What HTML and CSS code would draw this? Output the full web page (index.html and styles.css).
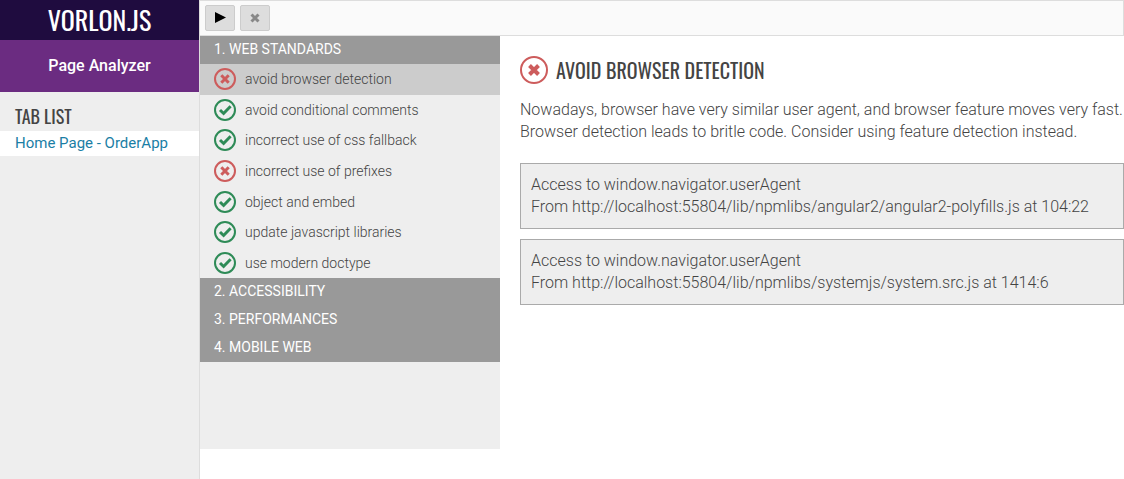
FILE: index.html
```
<!DOCTYPE html>
<html lang="en">
<head>
<meta charset="utf-8">
<title>Vorlon.JS - Page Analyzer</title>
<link rel="stylesheet" href="styles.css">
</head>
<body>
<svg class="defs" aria-hidden="true">
  <symbol id="cross" viewBox="0 0 22 22">
    <circle cx="11" cy="11" r="10" fill="none" stroke="currentColor" stroke-width="2"/>
    <path d="M7.300 7.300l7.400 7.400M14.700 7.300l-7.400 7.400" stroke="currentColor" stroke-width="3"/>
  </symbol>
  <symbol id="cross-large" viewBox="0 0 28 28">
    <circle cx="14" cy="14" r="13" fill="none" stroke="currentColor" stroke-width="2"/>
    <path d="M9.500 9.500l9 9M18.500 9.500l-9 9" stroke="currentColor" stroke-width="4"/>
  </symbol>
  <symbol id="check" viewBox="0 0 22 22">
    <circle cx="11" cy="11" r="10" fill="none" stroke="currentColor" stroke-width="2"/>
    <path d="M6 11l3.600 3.500 7-7.200" fill="none" stroke="currentColor" stroke-width="3"/>
  </symbol>
</svg>
<div class="app">
  <aside class="sidebar">
    <div class="logo">VORLON.JS</div>
    <div class="plugin-name">Page Analyzer</div>
    <h2 class="tabs-title">TAB LIST</h2>
    <nav><a class="tab" href="#home">Home Page - OrderApp</a></nav>
  </aside>
  <main class="main">
    <div class="toolbar">
      <button class="tool" aria-label="Run"><svg width="12" height="12" viewBox="0 0 12 12"><path d="M1 0v11L12 5.500z" fill="#000"/></svg></button>
      <button class="tool" aria-label="Clear"><svg width="12" height="12" viewBox="0 0 12 12"><path d="M2.500 2.500l7 7M9.500 2.500l-7 7" stroke="#888" stroke-width="3"/></svg></button>
    </div>
    <div class="content">
      <nav class="rules">
        <h3 class="category">1. WEB STANDARDS</h3>
        <ul class="rule-list">
          <li><a class="rule selected" href="#r1"><svg class="status fail"><use href="#cross"/></svg>avoid browser detection</a></li>
          <li><a class="rule" href="#r2"><svg class="status pass"><use href="#check"/></svg>avoid conditional comments</a></li>
          <li><a class="rule" href="#r3"><svg class="status pass"><use href="#check"/></svg>incorrect use of css fallback</a></li>
          <li><a class="rule" href="#r4"><svg class="status fail"><use href="#cross"/></svg>incorrect use of prefixes</a></li>
          <li><a class="rule" href="#r5"><svg class="status pass"><use href="#check"/></svg>object and embed</a></li>
          <li><a class="rule" href="#r6"><svg class="status pass"><use href="#check"/></svg>update javascript libraries</a></li>
          <li><a class="rule" href="#r7"><svg class="status pass"><use href="#check"/></svg>use modern doctype</a></li>
        </ul>
        <h3 class="category">2. ACCESSIBILITY</h3>
        <h3 class="category">3. PERFORMANCES</h3>
        <h3 class="category">4. MOBILE WEB</h3>
      </nav>
      <section class="detail">
        <h1 class="detail-title"><svg class="status-large fail"><use href="#cross-large"/></svg>AVOID BROWSER DETECTION</h1>
        <p class="description">Nowadays, browser have very similar user agent, and browser feature moves very fast.<br>Browser detection leads to britle code. Consider using feature detection instead.</p>
        <div class="finding">Access to window.navigator.userAgent<br>From http://localhost:55804/lib/npmlibs/angular2/angular2-polyfills.js at 104:22</div>
        <div class="finding">Access to window.navigator.userAgent<br>From http://localhost:55804/lib/npmlibs/systemjs/system.src.js at 1414:6</div>
      </section>
    </div>
  </main>
</div>
</body>
</html>
```
FILE: styles.css
```
* { box-sizing: border-box; }
body {
  margin: 0;
  background: #fff;
  color: #444;
  font: 300 16px/22px Roboto, sans-serif;
}
h1, h2, h3, p, ul { margin: 0; padding: 0; }
a { text-decoration: none; }
.defs { display: none; }
.app { display: flex; min-height: 100vh; }
.sidebar {
  flex: 0 0 200px;
  background: #eee;
  border-right: 1px solid #ddd;
}
.logo {
  height: 40px;
  background: #1f0c3f;
  color: #fff;
  text-align: center;
  font: 400 26px/40px Oswald, "Roboto Condensed", "Liberation Sans Narrow", sans-serif;
}
.plugin-name {
  background: #6b2c81;
  color: #fff;
  text-align: center;
  font-weight: 500;
  line-height: 52px;
}
.tabs-title {
  padding: 14px 15px 5px;
  font: 400 18px/20px Oswald, "Roboto Condensed", "Liberation Sans Narrow", sans-serif;
}
.tab {
  display: block;
  padding: 0 15px;
  background: #fff;
  color: #1a7ea5;
  font-size: 15px;
  font-weight: 400;
  line-height: 25px;
}
.main { flex: 1; min-width: 0; display: flex; flex-direction: column; }
.toolbar {
  display: flex;
  gap: 5px;
  height: 36px;
  padding: 4px 5px;
  background: #fafafa;
  border: 1px solid #ddd;
  border-left-width: 0;
}
.tool {
  display: grid;
  place-items: center;
  width: 30px;
  height: 26px;
  padding: 0;
  background: #ddd;
  border: 1px solid #ccc;
  border-radius: 2px;
}
.content { flex: 1; display: flex; }
.rules { flex: 0 0 300px; margin-bottom: 30px; background: #eee; }
.category {
  padding: 0 14px 2px;
  background: #999;
  color: #fff;
  font-size: 14px;
  font-weight: 400;
  line-height: 26px;
}
.rule-list { display: grid; min-height: 214px; list-style: none; }
.rule-list li { display: grid; }
.rule {
  display: flex;
  align-items: center;
  gap: 9px;
  padding: 0 14px;
  color: #444;
  font-size: 14px;
}
.selected { background: #ccc; }
.status { width: 22px; height: 22px; }
.status-large { width: 28px; height: 28px; }
.fail { color: #cd5c5c; }
.pass { color: #2e8b57; }
.detail { flex: 1; min-width: 0; padding: 20px 0 20px 20px; }
.detail-title {
  display: flex;
  align-items: center;
  gap: 8px;
  font: 400 20px/28px Oswald, "Roboto Condensed", "Liberation Sans Narrow", sans-serif;
}
.description { margin: 15px 0 20px; }
.finding {
  margin-bottom: 10px;
  padding: 10px;
  background: #eee;
  border: 1px solid #aaa;
}
```
